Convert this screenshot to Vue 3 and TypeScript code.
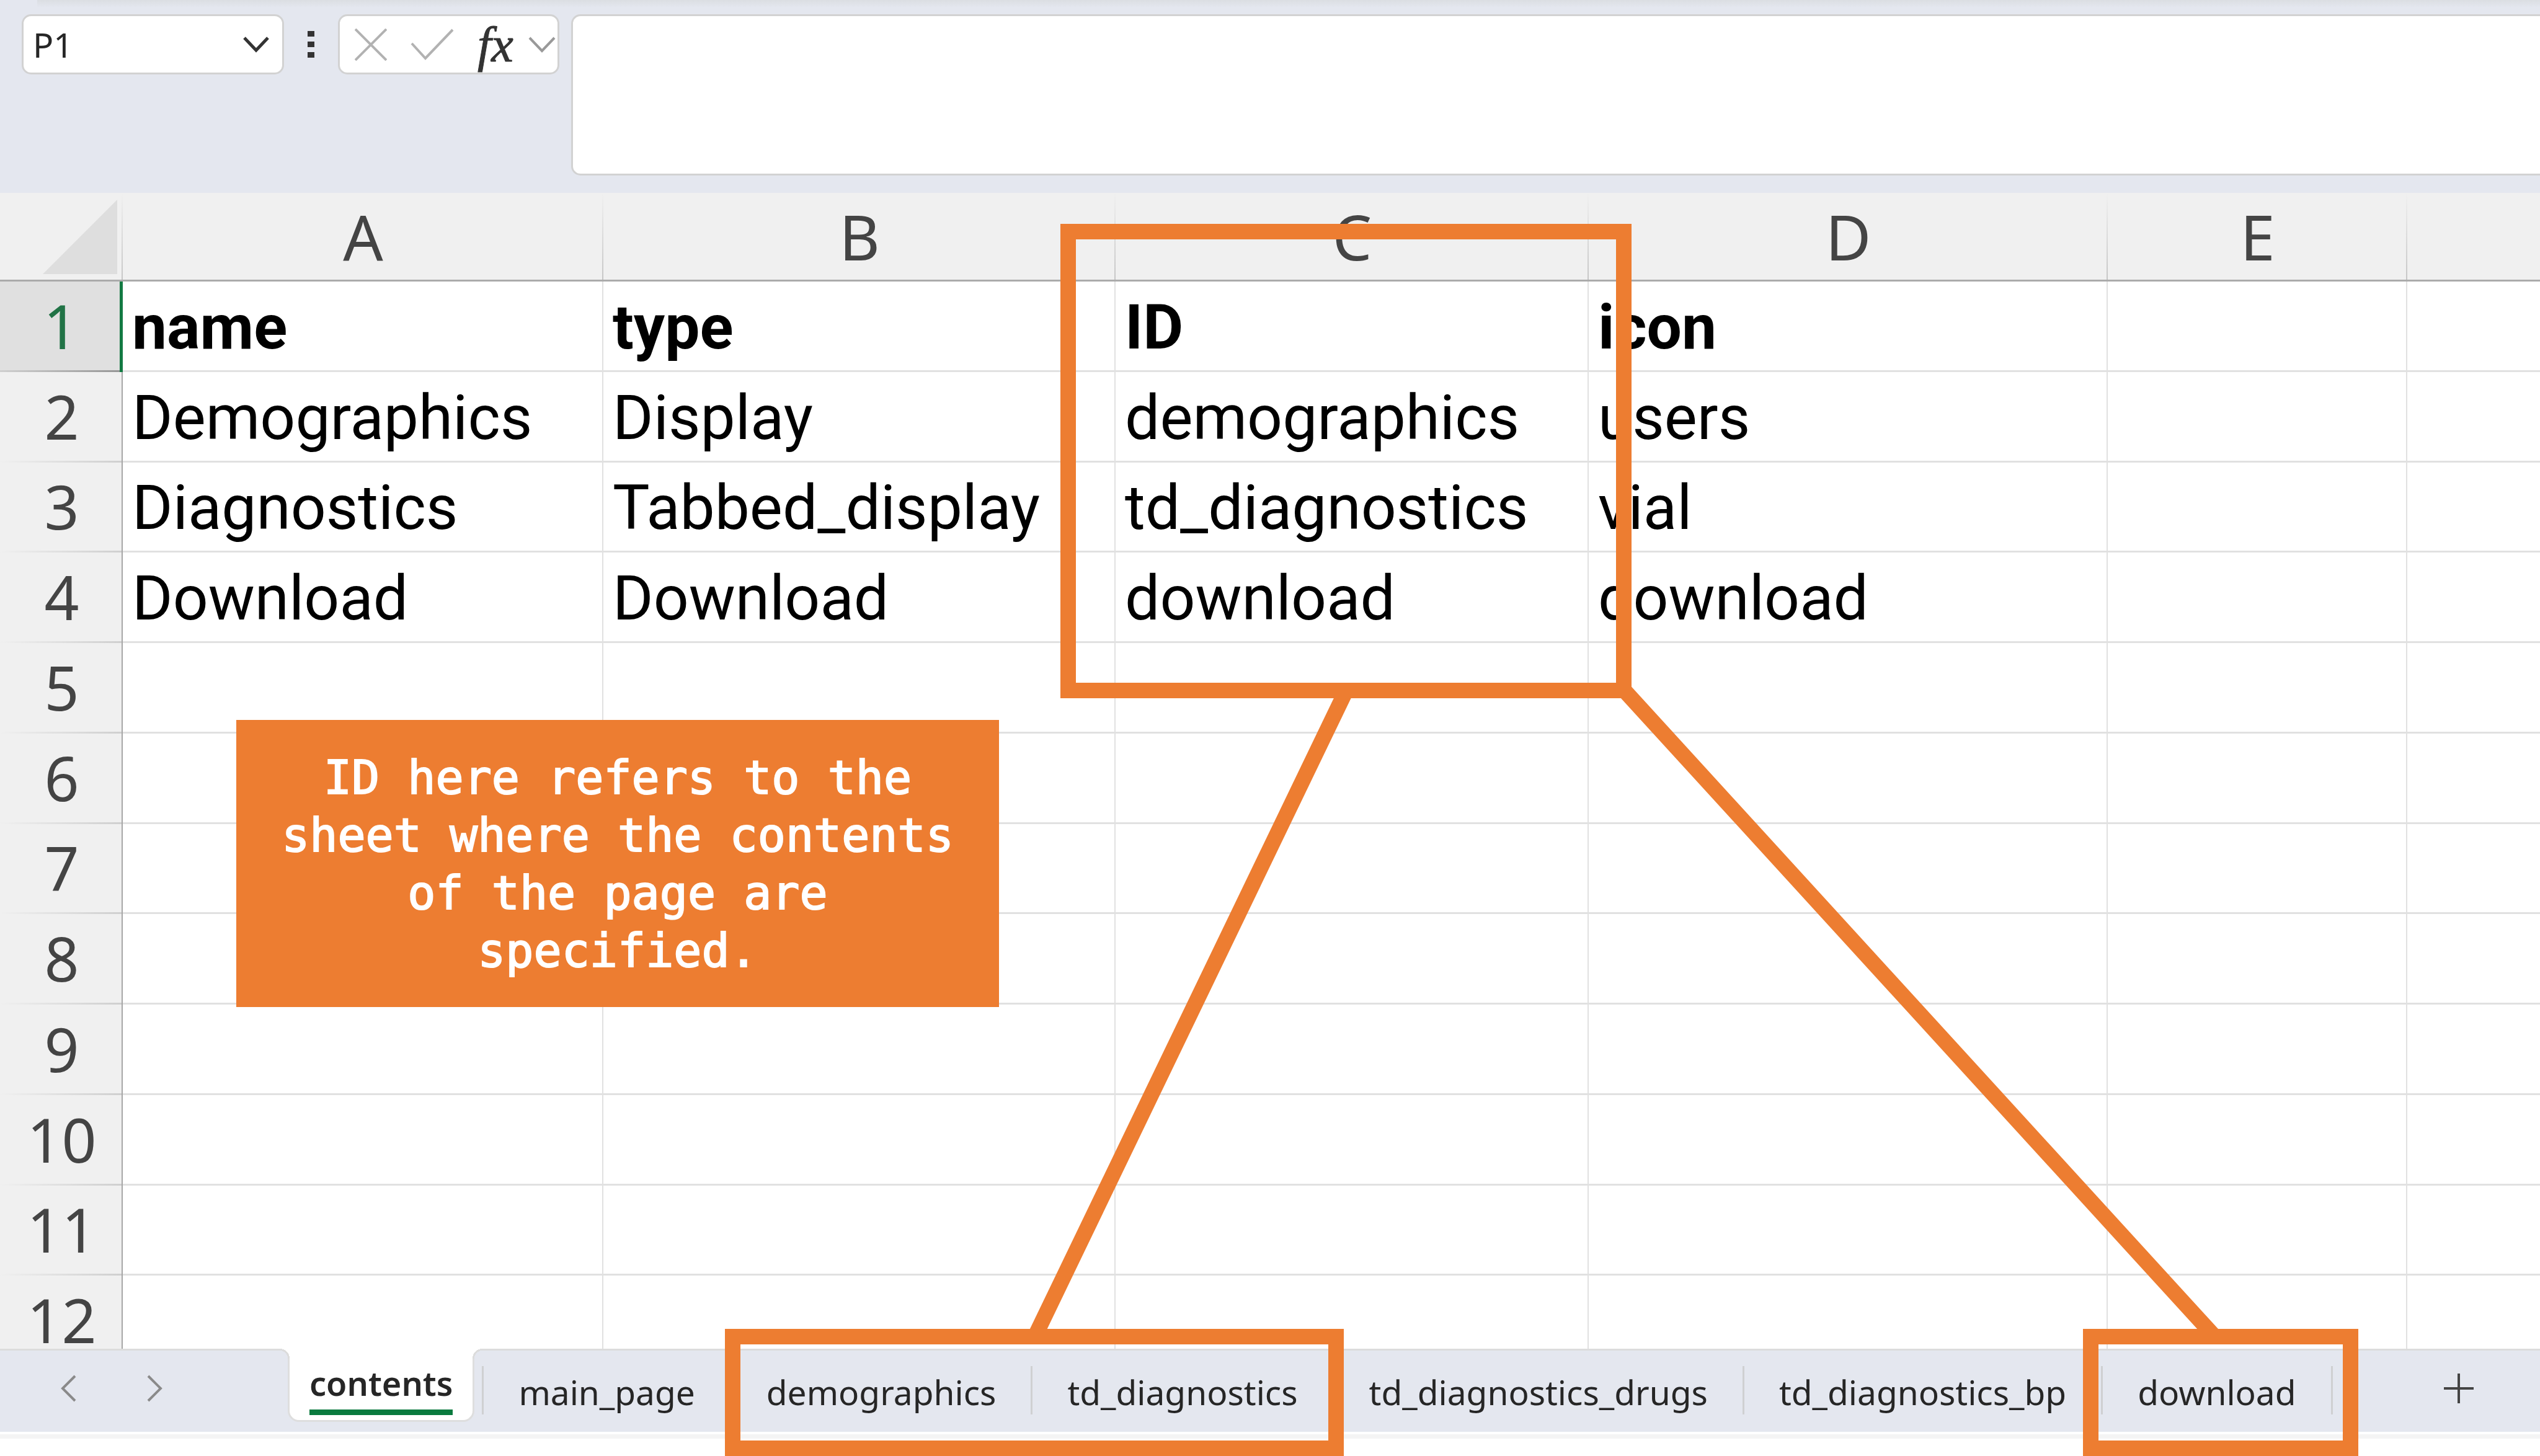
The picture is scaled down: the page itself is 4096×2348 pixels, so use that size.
<script setup lang="ts">
import { ref } from 'vue'

interface Column {
  letter: string
  kind: string
}

const columns: Column[] = [
  { letter: 'A', kind: 'col-a' },
  { letter: 'B', kind: 'col-b' },
  { letter: 'C', kind: 'col-c' },
  { letter: 'D', kind: 'col-d' },
  { letter: 'E', kind: 'col-e' },
  { letter: '', kind: 'col-rest' },
]

const data: string[][] = [
  ['name', 'type', 'ID', 'icon'],
  ['Demographics', 'Display', 'demographics', 'users'],
  ['Diagnostics', 'Tabbed_display', 'td_diagnostics', 'vial'],
  ['Download', 'Download', 'download', 'download'],
]

const rowCount = 12
const sheets: string[] = [
  'contents',
  'main_page',
  'demographics',
  'td_diagnostics',
  'td_diagnostics_drugs',
  'td_diagnostics_bp',
  'download',
]

const activeSheet = ref('contents')
const cellName = ref('P1')
const formula = ref('')

function cell(row: number, col: number): string {
  return data[row - 1]?.[col] ?? ''
}
</script>

<template>
  <div class="app">
    <header class="toolbar">
      <div class="name-box">
        <input v-model="cellName" class="name-input" type="text" aria-label="Name box" />
        <button class="icon-button" type="button" aria-label="Show names">
          <svg width="44" height="28" viewBox="0 0 44 28" fill="none" stroke="#333" stroke-width="5">
            <path d="M3 3 L22 23 L41 3" />
          </svg>
        </button>
      </div>
      <div class="grip" aria-hidden="true"><i></i><i></i><i></i></div>
      <div class="formula-tools">
        <button class="icon-button" type="button" aria-label="Cancel">
          <svg width="52" height="52" viewBox="0 0 52 52" fill="none" stroke="#b2b2b2" stroke-width="4">
            <path d="M1 1 L51 51 M51 1 L1 51" />
          </svg>
        </button>
        <button class="icon-button" type="button" aria-label="Enter">
          <svg width="70" height="52" viewBox="0 0 70 52" fill="none" stroke="#b2b2b2" stroke-width="4">
            <path d="M2 24 L24 48 L68 2" />
          </svg>
        </button>
        <button class="icon-button fx" type="button" aria-label="Insert function">fx</button>
        <button class="icon-button" type="button" aria-label="More functions">
          <svg width="44" height="28" viewBox="0 0 44 28" fill="none" stroke="#999" stroke-width="4">
            <path d="M2 3 L22 24 L42 3" />
          </svg>
        </button>
      </div>
      <textarea v-model="formula" class="formula" aria-label="Formula bar"></textarea>
    </header>

    <main class="sheet">
      <table class="grid">
        <colgroup>
          <col class="col-head" />
          <col v-for="c in columns" :key="c.kind" :class="c.kind" />
        </colgroup>
        <thead>
          <tr>
            <th class="corner">
              <svg width="120" height="120" viewBox="0 0 120 120" aria-hidden="true">
                <path d="M120 0 V120 H0 Z" fill="#dedede" />
              </svg>
            </th>
            <th v-for="c in columns" :key="c.kind" class="col-title" scope="col">{{ c.letter }}</th>
          </tr>
        </thead>
        <tbody>
          <tr v-for="r in rowCount" :key="r" :class="{ current: r === 1 }">
            <th class="row-title" scope="row">{{ r }}</th>
            <td v-for="(c, i) in columns" :key="c.kind">{{ cell(r, i) }}</td>
          </tr>
        </tbody>
      </table>
    </main>

    <footer class="tab-bar">
      <div class="tab-nav">
        <button class="icon-button" type="button" aria-label="Previous sheet">
          <svg width="26" height="44" viewBox="0 0 26 44" fill="none" stroke="#8a8a8a" stroke-width="4">
            <path d="M23 2 L3 22 L23 42" />
          </svg>
        </button>
        <button class="icon-button" type="button" aria-label="Next sheet">
          <svg width="26" height="44" viewBox="0 0 26 44" fill="none" stroke="#8a8a8a" stroke-width="4">
            <path d="M3 2 L23 22 L3 42" />
          </svg>
        </button>
      </div>
      <ul class="tabs">
        <li v-for="s in sheets" :key="s" class="tab" :class="{ active: s === activeSheet }">
          <button type="button" class="tab-button" @click="activeSheet = s"><span>{{ s }}</span></button>
        </li>
      </ul>
      <button class="icon-button add" type="button" aria-label="New sheet">
        <svg width="50" height="50" viewBox="0 0 50 50" fill="none" stroke="#444" stroke-width="4">
          <path d="M25 1 V49 M1 25 H49" />
        </svg>
      </button>
    </footer>
    <div class="status-edge"></div>

    <div class="notes">
      <svg class="connectors" width="2000" height="1100" viewBox="0 0 2000 1100" fill="none" stroke="#ed7d31" stroke-width="25">
        <path d="M571 13 L69 1055" />
        <path d="M1019 13 L1971 1055" />
      </svg>
      <div class="frame frame-ids"></div>
      <div class="frame frame-sheets"></div>
      <div class="frame frame-download"></div>
      <p class="callout">ID here refers to the sheet where the contents of the page are specified.</p>
    </div>
  </div>
</template>

<style>
body {
  margin: 0;
  background: #fff;
}
</style>

<style scoped>
.app {
  position: relative;
  display: flex;
  flex-direction: column;
  height: 100vh;
  overflow: hidden;
  background: #fff;
  font-family: 'Noto Sans', 'Open Sans', sans-serif;
  color: #262626;
}

button,
input,
textarea {
  margin: 0;
  padding: 0;
  border: 0;
  background: none;
  color: inherit;
  font: inherit;
  outline: none;
}

svg {
  display: block;
}

/* Formula toolbar */
.toolbar {
  display: flex;
  flex: none;
  align-items: flex-start;
  box-sizing: border-box;
  height: 311px;
  padding: 23px 0 0 35px;
  background: linear-gradient(#dbdee2, #e4e7ef) 60px 0 / 100% 12px no-repeat #e4e7ef;
}

.name-box,
.formula-tools {
  display: flex;
  flex: none;
  align-items: center;
  box-sizing: border-box;
  height: 97px;
  border: 3px solid #d2d2d2;
  border-radius: 15px;
  background: #fff;
}

.name-box {
  width: 423px;
  padding: 0 20px 0 15px;
}

.name-input {
  flex: 1;
  min-width: 0;
  height: 80px;
  font-size: 55px;
}

.grip {
  display: flex;
  flex-direction: column;
  gap: 8px;
  width: 11px;
  margin: 27px 38px 0;
}

.grip i {
  height: 9px;
  background: #333;
}

.formula-tools {
  gap: 38px;
  width: 357px;
  padding-left: 24px;
}

.fx {
  width: 44px;
  font-family: 'Liberation Serif', serif;
  font-style: italic;
  font-size: 80px;
  line-height: 86px;
  text-align: left;
  color: #333;
  -webkit-text-stroke: 1px #333;
}

.formula {
  flex: 1;
  box-sizing: border-box;
  height: 260px;
  margin-left: 19px;
  border: 3px solid #d2d2d2;
  border-right: 0;
  border-radius: 15px 0 0 15px;
  background: #fff;
  resize: none;
}

/* Spreadsheet grid */
.sheet {
  flex: 1;
  min-height: 0;
  overflow: hidden;
}

.grid {
  width: 100%;
  height: 1892px;
  border-collapse: separate;
  border-spacing: 0;
  table-layout: fixed;
}

.col-head { width: 198px; }
.col-a { width: 775px; }
.col-b { width: 826px; }
.col-c { width: 763px; }
.col-d { width: 837px; }
.col-e { width: 483px; }

th,
td {
  box-sizing: border-box;
  padding: 0;
  font-weight: 400;
  white-space: nowrap;
}

thead tr {
  height: 143px;
}

.corner,
.col-title {
  border-bottom: 3px solid #ababab;
  background: linear-gradient(transparent, #c6c6c6) right / 2px 100% no-repeat #f0f0f0;
}

.corner {
  padding: 2px 0 0 69px;
}

.col-title {
  font-size: 101px;
  line-height: 138px;
  color: #444;
}

.row-title {
  padding: 0 0 4px 3px;
  border-right: 2px solid #a6a6a6;
  background: linear-gradient(90deg, transparent, #cfcfcf) bottom / 100% 3px no-repeat #f0f0f0;
  font-size: 98px;
  line-height: 134px;
  color: #444;
}

.current .row-title {
  border-right: 5px solid #137a43;
  background: linear-gradient(90deg, #cfcfcf, #969696) bottom / 100% 3px no-repeat #e0e0e0;
  color: #217346;
}

td {
  padding: 5px 0 0 15px;
  border-right: 2px solid #e1e1e1;
  border-bottom: 3px solid #e1e1e1;
  font-family: Roboto, sans-serif;
  font-size: 100px;
  line-height: 120px;
  color: #000;
}

.current td {
  font-weight: 700;
}

td:last-child {
  border-right: 0;
}

.col-title:last-child {
  background: #f0f0f0;
}

/* Sheet tabs */
.tab-bar {
  display: flex;
  flex: none;
  align-items: flex-start;
  box-sizing: border-box;
  height: 134px;
  border-top: 3px solid #dcdcdc;
  background: #e4e7ef;
}

.tab-nav {
  display: flex;
  flex: none;
  gap: 112px;
  box-sizing: border-box;
  width: 464px;
  padding: 39px 0 0 98px;
}

.tabs {
  display: flex;
  margin: 0;
  padding: 0;
  list-style: none;
  font-size: 55px;
}

.tab {
  box-sizing: border-box;
  height: 78px;
  margin-top: 25px;
  border-right: 3px solid #cfd0d2;
}

.tab-button {
  padding: 0 56px;
  line-height: 84px;
  white-space: nowrap;
}

.tab.active {
  position: relative;
  height: 118px;
  margin: -3px 12px 0 0;
  border: 3px solid #dedede;
  border-top: 0;
  border-radius: 0 0 18px 18px;
  background: #fff;
}

.active .tab-button {
  padding: 18px 32px 0;
  font-size: 54px;
  font-weight: 600;
  line-height: 75px;
}

.active .tab-button span {
  display: block;
  padding-bottom: 5px;
  border-bottom: 9px solid #0a7a3e;
}

.active::before,
.active::after {
  content: '';
  position: absolute;
  top: 0;
  width: 16px;
  height: 16px;
}

.active::before {
  right: 100%;
  background: radial-gradient(circle at 0 100%, #e4e7ef 13px, #dcdcdc 13px, #dcdcdc 16px, #fff 16px);
}

.active::after {
  left: 100%;
  background: radial-gradient(circle at 100% 100%, #e4e7ef 13px, #dcdcdc 13px, #dcdcdc 16px, #fff 16px);
}

.active + .tab {
  border-left: 3px solid #cfd0d2;
}

.add {
  margin: 36px 0 0 178px;
}

.status-edge {
  flex: none;
  box-sizing: border-box;
  height: 39px;
  border-top: 4px solid #fff;
  border-bottom: 28px solid #fff;
  background: #f4f4f4;
}

/* Annotations drawn over the sheet */
.notes {
  position: absolute;
  inset: 0;
  pointer-events: none;
}

.connectors {
  position: absolute;
  left: 1600px;
  top: 1100px;
}

.frame {
  position: absolute;
  box-sizing: border-box;
  border: 25px solid #ed7d31;
}

.frame-ids {
  left: 1710px;
  top: 361px;
  width: 921px;
  height: 765px;
}

.frame-sheets {
  left: 1169px;
  top: 2143px;
  width: 998px;
  height: 205px;
}

.frame-download {
  left: 3359px;
  top: 2143px;
  width: 444px;
  height: 205px;
}

.callout {
  position: absolute;
  left: 381px;
  top: 1161px;
  box-sizing: border-box;
  width: 1230px;
  margin: 0;
  padding: 47px 60px 44px;
  background: #ed7d31;
  font-family: 'DejaVu Sans Mono', monospace;
  font-size: 75px;
  line-height: 93px;
  text-align: center;
  color: #fff;
  -webkit-text-stroke: 2px #fff;
}
</style>
